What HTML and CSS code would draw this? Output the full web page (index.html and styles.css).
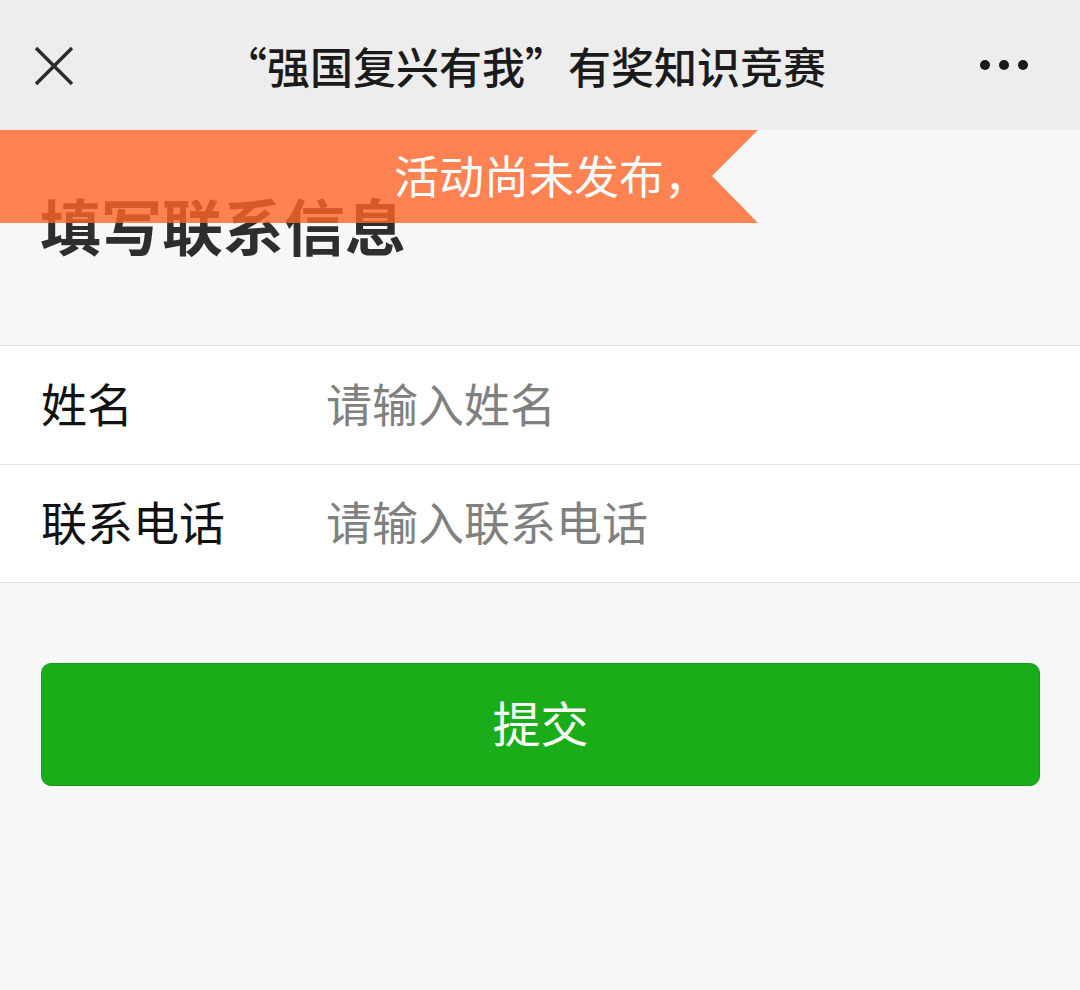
FILE: index.html
```html
<!DOCTYPE html>
<html lang="zh-CN">
<head>
    <meta charset="UTF-8">
    <meta name="viewport" content="width=device-width, initial-scale=1.0">
    <title>“强国复兴有我”有奖知识竞赛</title>
    <link rel="stylesheet" href="styles.css">
</head>
<body>
    <div class="topbar">
        <div class="topbar-btn close">
            <svg width="40" height="40" viewBox="0 0 40 40">
                <path d="M2 2 L38 38 M38 2 L2 38" stroke="#2b2b2b" stroke-width="3.4" stroke-linecap="butt" fill="none"/>
            </svg>
        </div>
        <div class="topbar-title">“强国复兴有我”有奖知识竞赛</div>
        <div class="topbar-btn more">
            <svg width="48" height="12" viewBox="0 0 48 12">
                <circle cx="5" cy="6" r="5" fill="#1a1a1a"/>
                <circle cx="24" cy="6" r="5" fill="#1a1a1a"/>
                <circle cx="43" cy="6" r="5" fill="#1a1a1a"/>
            </svg>
        </div>
    </div>

    <div class="page">
        <div class="ribbon">
            <span>活动尚未发布，</span>
        </div>

        <h1 class="page-title">填写联系信息</h1>

        <div class="form-list">
            <div class="form-row">
                <label class="form-label">姓名</label>
                <input class="form-input" type="text" placeholder="请输入姓名">
            </div>
            <div class="form-row">
                <label class="form-label">联系电话</label>
                <input class="form-input" type="tel" placeholder="请输入联系电话">
            </div>
        </div>

        <div class="btn-area">
            <button class="submit-btn">提交</button>
        </div>
    </div>
</body>
</html>
```

FILE: styles.css
```css
* {
    box-sizing: border-box;
}
body {
    margin: 0;
    font-family: "Noto Sans CJK SC", "Noto Sans", sans-serif;
    background-color: #f7f7f7;
    color: #000;
}
.topbar {
    height: 130px;
    background-color: #ededed;
    display: flex;
    align-items: center;
    justify-content: space-between;
    padding: 0 52px 0 34px;
}
.topbar-btn {
    width: 60px;
    display: flex;
    align-items: center;
}
.topbar-btn.close {
    justify-content: flex-start;
    padding-top: 2px;
}
.topbar-btn.more {
    justify-content: flex-end;
}
.topbar-title {
    flex: 1;
    text-align: center;
    font-size: 43px;
    font-weight: 500;
    color: #1b1b1b;
    padding-right: 12px;
}
.page {
    position: relative;
}
.ribbon {
    position: absolute;
    top: 0;
    left: 0;
    width: 758px;
    height: 93px;
    background-color: rgba(255, 100, 40, 0.8);
    clip-path: polygon(0 0, 100% 0, 712px 46px, 100% 100%, 0 100%);
    display: flex;
    align-items: center;
    padding-left: 394px;
    z-index: 2;
}
.ribbon span {
    color: #fff;
    font-size: 45px;
    line-height: 1;
    padding-bottom: 4px;
}
.page-title {
    margin: 0;
    padding: 53px 0 0 40px;
    height: 215px;
    font-size: 61px;
    line-height: 84px;
    font-weight: 700;
    color: #2e2e2e;
}
.form-list {
    background-color: #fff;
    border-top: 1px solid #e2e2e2;
    border-bottom: 1px solid #e2e2e2;
}
.form-row {
    display: flex;
    align-items: center;
    height: 118px;
    padding-left: 41px;
    padding-bottom: 7px;
}
.form-row + .form-row {
    border-top: 1px solid #e2e2e2;
}
.form-label {
    width: 285px;
    font-size: 46px;
    color: #111;
}
.form-input {
    flex: 1;
    border: none;
    outline: none;
    background: transparent;
    font-family: inherit;
    font-size: 46px;
    color: #333;
    padding: 0;
}
.form-input::placeholder {
    color: #808080;
}
.btn-area {
    padding: 80px 40px 0 41px;
}
.submit-btn {
    width: 100%;
    height: 123px;
    border: 1px solid #179b16;
    border-radius: 10px;
    background-color: #1aad19;
    color: #fff;
    font-family: inherit;
    font-size: 48px;
    padding-bottom: 8px;
}
```
